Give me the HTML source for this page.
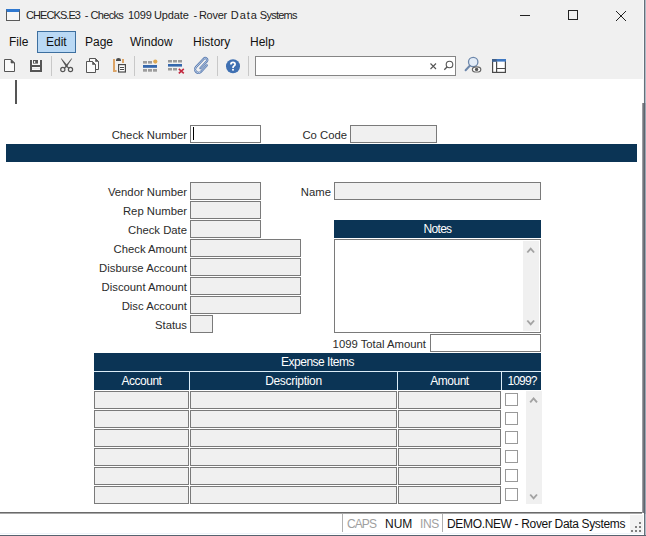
<!DOCTYPE html>
<html><head><meta charset="utf-8">
<style>
html,body{margin:0;padding:0;}
body{width:646px;height:536px;position:relative;overflow:hidden;background:#fff;font-family:"Liberation Sans",sans-serif;color:#000;}
.a{position:absolute;}
.t{position:absolute;white-space:nowrap;font-size:11.3px;line-height:14px;color:#2b2b2b;}
.r{text-align:right;}
.f{position:absolute;box-sizing:border-box;border:1px solid #7a7a7a;background:#f0f0f0;}
.fw{position:absolute;box-sizing:border-box;border:1px solid #7a7a7a;background:#fff;}
.hd{position:absolute;background:#0b3455;color:#fff;text-align:center;font-size:12px;line-height:18px;white-space:nowrap;letter-spacing:-0.5px;}
.sep{position:absolute;width:1px;background:#c8c8c8;}
.cb{position:absolute;box-sizing:border-box;width:13px;height:13px;border:1px solid #999;background:#fff;}
</style></head><body>
<!-- chrome -->
<div class="a" style="left:0;top:0;width:646px;height:79px;background:#f0f0f0;"></div>
<!-- title icon -->
<div class="a" style="left:6px;top:9px;width:14px;height:12px;box-sizing:border-box;border:1px solid #5a5a5a;border-top:3px solid #2f78d0;background:#f6f6f6;"></div>
<div class="t" style="left:26px;top:8px;font-size:11px;letter-spacing:-0.925px;color:#222;">CHECKS.E3</div>
<div class="t" style="left:84.8px;top:8px;font-size:11px;letter-spacing:0px;color:#222;">-</div>
<div class="t" style="left:90.6px;top:8px;font-size:11px;letter-spacing:-0.7px;color:#222;">Checks</div>
<div class="t" style="left:127.9px;top:8px;font-size:11px;letter-spacing:-0.2px;color:#222;">1099</div>
<div class="t" style="left:153.9px;top:8px;font-size:11px;letter-spacing:-0.08px;color:#222;">Update</div>
<div class="t" style="left:193.5px;top:8px;font-size:11px;letter-spacing:0px;color:#222;">-</div>
<div class="t" style="left:198.9px;top:8px;font-size:11px;letter-spacing:-0.275px;color:#222;">Rover</div>
<div class="t" style="left:230.7px;top:8px;font-size:11px;letter-spacing:1px;color:#222;">Data</div>
<div class="t" style="left:259.8px;top:8px;font-size:11px;letter-spacing:-0.75px;color:#222;">Systems</div>
<!-- window controls -->
<div class="a" style="left:520px;top:15px;width:10px;height:1px;background:#222;"></div>
<div class="a" style="left:568px;top:10px;width:10px;height:10px;box-sizing:border-box;border:1px solid #222;"></div>
<svg class="a" style="left:615px;top:10px;" width="12" height="12" viewBox="0 0 12 12"><path d="M1 1L11 11M11 1L1 11" stroke="#222" stroke-width="1"/></svg>
<!-- menu -->
<div class="a" style="left:37px;top:31px;width:39px;height:22px;box-sizing:border-box;border:1px solid #3d6f9f;background:#bad9f5;"></div>
<div class="t" style="left:9px;top:35px;font-size:12px;color:#111;">File</div>
<div class="t" style="left:46px;top:35px;font-size:12px;color:#111;">Edit</div>
<div class="t" style="left:85px;top:35px;font-size:12px;color:#111;">Page</div>
<div class="t" style="left:130px;top:35px;font-size:12px;color:#111;">Window</div>
<div class="t" style="left:193px;top:35px;font-size:12px;color:#111;">History</div>
<div class="t" style="left:250px;top:35px;font-size:12px;color:#111;">Help</div>
<!-- toolbar separators -->
<div class="sep" style="left:51px;top:56px;height:20px;"></div>
<div class="sep" style="left:134px;top:56px;height:20px;"></div>
<div class="sep" style="left:217px;top:56px;height:20px;"></div>
<div class="sep" style="left:248px;top:56px;height:20px;"></div>
<!-- search box -->
<div class="a" style="left:255px;top:56px;width:201px;height:20px;box-sizing:border-box;border:1px solid #858585;background:#fff;"></div>
<svg class="a" style="left:0;top:0;" width="646" height="80" viewBox="0 0 646 80">
<!-- new doc -->
<path d="M4.5 59.5H11L14.5 63V71.5H4.5Z" fill="#fafafa" stroke="#555" stroke-width="1"/>
<path d="M11 59.5V63H14.5Z" fill="#555" stroke="#555" stroke-width="0.6"/>
<!-- save -->
<rect x="32" y="60" width="8" height="10" fill="#fafafa"/>
<rect x="30" y="60" width="2" height="12" fill="#555"/>
<rect x="40" y="60" width="2" height="12" fill="#555"/>
<rect x="30" y="65" width="12" height="2" fill="#555"/>
<rect x="30" y="70" width="12" height="2" fill="#555"/>
<rect x="33" y="60" width="5" height="3.6" fill="#555"/>
<rect x="34" y="61" width="1.2" height="2" fill="#eee"/>
<rect x="32" y="68.2" width="8" height="0.6" fill="#ddd"/>
<!-- scissors -->
<path d="M60.8 58.6L61.6 58.4L67.6 65.6L66.2 67.2Z" fill="#555"/>
<path d="M72.2 58.6L71.4 58.4L65.8 65.4L67 66.6Z" fill="#555"/>
<path d="M66.4 66.2L64.2 68.2M66.6 66.2L69 68.2" stroke="#555" stroke-width="1.2"/>
<circle cx="62.8" cy="69.5" r="2.1" fill="none" stroke="#555" stroke-width="1.2"/>
<circle cx="70.5" cy="69.5" r="2.1" fill="none" stroke="#555" stroke-width="1.2"/>
<!-- copy -->
<path d="M89.5 61V58.5H95.5L98.5 61.5V69.5H95.5" fill="#fafafa" stroke="#555" stroke-width="1"/>
<path d="M95.5 58.5V61.5H98.5Z" fill="#555" stroke="#555" stroke-width="0.6"/>
<path d="M86.5 61.5H92.5L95.5 64.5V72.5H86.5Z" fill="#fafafa" stroke="#555" stroke-width="1"/>
<path d="M92.5 61.5V64.5H95.5Z" fill="#555" stroke="#555" stroke-width="0.6"/>
<!-- paste -->
<rect x="113" y="59" width="2" height="13" fill="#dda466"/>
<rect x="115" y="70" width="1.6" height="2" fill="#dda466"/>
<rect x="122" y="59" width="2" height="4" fill="#dda466"/>
<path d="M116 61V60.2Q116 58 118.5 58Q121 58 121 60.2V61Z" fill="#4a4a4a"/>
<rect x="118.6" y="64.6" width="6.8" height="7.4" fill="#fff" stroke="#4a4a4a" stroke-width="1.2"/>
<rect x="120" y="67" width="4" height="1" fill="#4a4a4a"/>
<rect x="120" y="69" width="4" height="1" fill="#4a4a4a"/>
<!-- insert row -->
<rect x="143" y="61" width="4" height="2.6" fill="#9c9c9c"/>
<rect x="148" y="61" width="4" height="2.6" fill="#9c9c9c"/>
<circle cx="155.3" cy="61.6" r="2.1" fill="#dea852"/>
<rect x="143" y="65" width="14" height="2.8" fill="#3467ad"/>
<rect x="143" y="69" width="4" height="2.7" fill="#9c9c9c"/>
<rect x="148" y="69" width="4" height="2.7" fill="#9c9c9c"/>
<rect x="153" y="69" width="4" height="2.7" fill="#9c9c9c"/>
<!-- delete row -->
<rect x="168" y="60" width="4" height="2.5" fill="#9a9a9a"/>
<rect x="173" y="60" width="4" height="2.5" fill="#9a9a9a"/>
<rect x="178" y="60" width="4" height="2.5" fill="#9a9a9a"/>
<rect x="168" y="64" width="14" height="2.6" fill="#3467ad"/>
<rect x="168" y="68" width="4" height="2.5" fill="#9a9a9a"/>
<rect x="173" y="68" width="4" height="2.5" fill="#9a9a9a"/>
<path d="M178.8 68.8L183.8 73.3M183.8 68.8L178.8 73.3" stroke="#c22a40" stroke-width="1.6"/>
<!-- paperclip -->
<g transform="translate(202 65.6) rotate(43)">
<path d="M3.4 -3.5V5.2A3.4 3.4 0 0 1 -3.4 5.2V-6.2A2 2 0 0 1 0.6 -6.2V3" fill="none" stroke="#5577ad" stroke-width="2.2" stroke-linecap="round"/>
<path d="M3.4 -3.5V5.2A3.4 3.4 0 0 1 -3.4 5.2V-6.2A2 2 0 0 1 0.6 -6.2V3" fill="none" stroke="#d4e3f6" stroke-width="0.7" stroke-linecap="round"/>
</g>
<!-- help -->
<circle cx="233" cy="66.3" r="7" fill="#3f70b2"/>
<path d="M230.9 64.4Q230.9 62.4 233 62.4Q235.1 62.4 235.1 64.3Q235.1 65.5 233.9 66.1Q233 66.6 233 67.9" fill="none" stroke="#fff" stroke-width="1.7"/><rect x="232.1" y="68.9" width="1.8" height="1.7" fill="#fff"/>
<!-- search glyphs -->
<path d="M430.5 63.5L436 69M436 63.5L430.5 69" stroke="#555" stroke-width="1.1"/>
<circle cx="449.5" cy="64.5" r="3.3" fill="none" stroke="#555" stroke-width="1.1"/>
<path d="M447 67L444.3 69.7" stroke="#555" stroke-width="1.3"/>
<!-- find -->
<circle cx="473.2" cy="62" r="4.7" fill="#e3ecf7" stroke="#6d87ab" stroke-width="1.3"/>
<path d="M469.8 65.8L465.6 70.2" stroke="#6d87ab" stroke-width="2" stroke-linecap="round"/>
<ellipse cx="476.6" cy="69.4" rx="4.2" ry="2.6" fill="#fff" stroke="#666" stroke-width="1.2"/>
<circle cx="476.6" cy="69.4" r="1.7" fill="#555"/>
<!-- layout -->
<rect x="492.6" y="59.6" width="12.8" height="12.8" fill="#fff" stroke="#4a4a4a" stroke-width="1.2"/>
<rect x="492" y="59" width="14" height="2.6" fill="#3f78c2"/>
<rect x="492" y="59" width="4.6" height="2.6" fill="#3f5f88"/>
<path d="M496.6 61.6V72.4M496.6 68.5H505.4" stroke="#4a4a4a" stroke-width="1.2"/>
</svg>
<!-- right border -->
<div class="a" style="left:643px;top:0;width:1px;height:103px;background:#f8f9fb;"></div>
<div class="a" style="left:644px;top:0;width:1px;height:536px;background:#65707a;"></div>
<div class="a" style="left:645px;top:0;width:1px;height:536px;background:#aebbc6;"></div>
<div class="a" style="left:642px;top:103px;width:4px;height:411px;background:linear-gradient(90deg,#9c9ca2 0,#9c9ca2 1px,#76787e 1px,#76787e 2px,#5d6670 2px,#5d6670 3px,#9ba5b1 3px);"></div>
<!-- cursor -->
<div class="a" style="left:15px;top:80px;width:2px;height:24px;background:#555;"></div>

<!-- form -->
<div class="t r" style="left:61px;width:126px;top:128px;">Check Number</div>
<div class="fw" style="left:190px;top:125px;width:71px;height:18px;"></div>
<div class="a" style="left:193px;top:127px;width:1px;height:13px;background:#000;"></div>
<div class="t r" style="left:250px;width:97px;top:128px;">Co Code</div>
<div class="f" style="left:350px;top:125px;width:87px;height:18px;"></div>
<div class="a" style="left:6px;top:144px;width:631px;height:18px;background:#0b3455;"></div>

<div class="t r" style="left:61px;width:126px;top:185px;">Vendor Number</div>
<div class="f" style="left:190px;top:182px;width:71px;height:18px;"></div>
<div class="t r" style="left:61px;width:126px;top:204px;">Rep Number</div>
<div class="f" style="left:190px;top:201px;width:71px;height:18px;"></div>
<div class="t r" style="left:61px;width:126px;top:223px;">Check Date</div>
<div class="f" style="left:190px;top:220px;width:71px;height:18px;"></div>
<div class="t r" style="left:61px;width:126px;top:242px;">Check Amount</div>
<div class="f" style="left:190px;top:239px;width:111px;height:18px;"></div>
<div class="t r" style="left:61px;width:126px;top:261px;">Disburse Account</div>
<div class="f" style="left:190px;top:258px;width:111px;height:18px;"></div>
<div class="t r" style="left:61px;width:126px;top:280px;">Discount Amount</div>
<div class="f" style="left:190px;top:277px;width:111px;height:18px;"></div>
<div class="t r" style="left:61px;width:126px;top:299px;">Disc Account</div>
<div class="f" style="left:190px;top:296px;width:111px;height:18px;"></div>
<div class="t r" style="left:61px;width:126px;top:318px;">Status</div>
<div class="f" style="left:190px;top:315px;width:23px;height:18px;"></div>

<div class="t r" style="left:251px;width:80px;top:185px;">Name</div>
<div class="f" style="left:334px;top:182px;width:207px;height:18px;"></div>

<div class="hd" style="left:334px;top:220px;width:207px;height:18px;letter-spacing:-0.7px;">Notes</div>
<div class="fw" style="left:334px;top:239px;width:207px;height:94px;"></div>
<div class="a" style="left:523px;top:241px;width:16px;height:90px;background:#f0f0f0;"></div>

<div class="t r" style="left:300px;width:126px;top:337px;">1099 Total Amount</div>
<div class="fw" style="left:430px;top:334px;width:111px;height:18px;"></div>

<div class="a" style="left:94px;top:353px;width:447px;height:37px;background:#dcedf8;"></div>
<div class="hd" style="left:94px;top:353px;width:447px;height:18px;">Expense Items</div>
<div class="hd" style="left:94px;top:372px;width:95px;height:18px;">Account</div>
<div class="hd" style="left:190px;top:372px;width:207px;height:18px;letter-spacing:-0.3px;">Description</div>
<div class="hd" style="left:398px;top:372px;width:103px;height:18px;">Amount</div>
<div class="hd" style="left:502px;top:372px;width:38px;padding-left:1px;height:18px;letter-spacing:-0.9px;">1099?</div>

<div class="f" style="left:94px;top:391px;width:95px;height:18px;"></div>
<div class="f" style="left:190px;top:391px;width:207px;height:18px;"></div>
<div class="f" style="left:398px;top:391px;width:103px;height:18px;"></div>
<div class="cb" style="left:505px;top:393px;"></div>
<div class="f" style="left:94px;top:410px;width:95px;height:18px;"></div>
<div class="f" style="left:190px;top:410px;width:207px;height:18px;"></div>
<div class="f" style="left:398px;top:410px;width:103px;height:18px;"></div>
<div class="cb" style="left:505px;top:412px;"></div>
<div class="f" style="left:94px;top:429px;width:95px;height:18px;"></div>
<div class="f" style="left:190px;top:429px;width:207px;height:18px;"></div>
<div class="f" style="left:398px;top:429px;width:103px;height:18px;"></div>
<div class="cb" style="left:505px;top:431px;"></div>
<div class="f" style="left:94px;top:448px;width:95px;height:18px;"></div>
<div class="f" style="left:190px;top:448px;width:207px;height:18px;"></div>
<div class="f" style="left:398px;top:448px;width:103px;height:18px;"></div>
<div class="cb" style="left:505px;top:450px;"></div>
<div class="f" style="left:94px;top:467px;width:95px;height:18px;"></div>
<div class="f" style="left:190px;top:467px;width:207px;height:18px;"></div>
<div class="f" style="left:398px;top:467px;width:103px;height:18px;"></div>
<div class="cb" style="left:505px;top:469px;"></div>
<div class="f" style="left:94px;top:486px;width:95px;height:18px;"></div>
<div class="f" style="left:190px;top:486px;width:207px;height:18px;"></div>
<div class="f" style="left:398px;top:486px;width:103px;height:18px;"></div>
<div class="cb" style="left:505px;top:488px;"></div>
<div class="a" style="left:526px;top:391px;width:16px;height:113px;background:#f0f0f0;"></div>

<!-- status bar -->
<div class="a" style="left:0;top:513px;width:644px;height:23px;background:#fff;"></div>
<div class="a" style="left:0;top:512px;width:642px;height:1px;background:#6a6a6a;"></div>
<div class="a" style="left:0;top:513px;width:642px;height:1px;background:#a8a8a8;"></div>
<div class="a" style="left:630px;top:515px;width:13px;height:18px;background:#f2f2f2;"></div>
<div class="a" style="left:639px;top:522px;width:2px;height:2px;background:#808080;"></div>
<div class="a" style="left:635px;top:526px;width:2px;height:2px;background:#808080;"></div>
<div class="a" style="left:639px;top:526px;width:2px;height:2px;background:#808080;"></div>
<div class="a" style="left:631px;top:530px;width:2px;height:2px;background:#808080;"></div>
<div class="a" style="left:635px;top:530px;width:2px;height:2px;background:#808080;"></div>
<div class="a" style="left:639px;top:530px;width:2px;height:2px;background:#808080;"></div>
<div class="a" style="left:342px;top:514px;width:1px;height:18px;background:#b0b0b0;"></div>
<div class="a" style="left:442px;top:514px;width:1px;height:18px;background:#b0b0b0;"></div>
<div class="t" style="left:347px;top:517px;font-size:12px;letter-spacing:-0.9px;color:#a0a0a0;">CAPS</div>
<div class="t" style="left:385px;top:517px;font-size:12px;color:#111;">NUM</div>
<div class="t" style="left:420px;top:517px;font-size:12px;letter-spacing:-0.4px;color:#a0a0a0;">INS</div>
<div class="t" style="left:447px;top:517px;font-size:12px;letter-spacing:-0.34px;color:#111;">DEMO.NEW - Rover Data Systems</div>
<div class="a" style="left:0;top:533px;width:644px;height:1px;background:#eef4fa;"></div>
<div class="a" style="left:0;top:535px;width:646px;height:1px;background:#56636f;"></div>
<svg class="a" style="left:0;top:0;" width="646" height="536" viewBox="0 0 646 536">
<path d="M527.3 252.5L530.7 248.6L534.1 252.5M527.3 320.5L530.7 324.4L534.1 320.5" fill="none" stroke="#a3a3a3" stroke-width="1.9"/>
<path d="M530.2 402.3L533.6 398.4L537 402.3M530.2 494.5L533.6 498.4L537 494.5" fill="none" stroke="#a3a3a3" stroke-width="1.9"/>
</svg>
</body></html>
